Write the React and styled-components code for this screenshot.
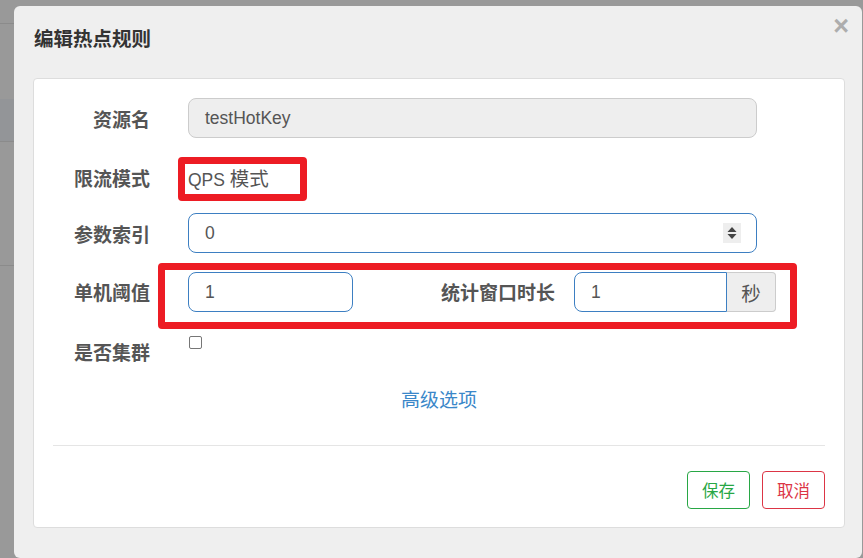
import React from "react";
import styled, { createGlobalStyle } from "styled-components";

const Global = createGlobalStyle`
  html, body { margin: 0; padding: 0; }
  body {
    font-family: "Liberation Sans", "Noto Sans CJK SC", sans-serif;
    background: #999;
  }
  * { box-sizing: border-box; }
`;

const Page = styled.div`
  display: flex;
  height: 558px;
  background: #999;
  overflow: hidden;
`;

const Sidebar = styled.div`
  width: 14px;
  flex-shrink: 0;
  display: flex;
  flex-direction: column;
`;

const SideBand = styled.div`
  height: ${(p) => p.$h}px;
  flex-shrink: 0;
  background: ${(p) => p.$bg || "#999"};
  border-bottom: 1px solid ${(p) => (p.$line ? "#8b8b8b" : "transparent")};
`;

const Modal = styled.div`
  flex: 1;
  margin: 6px 1px 0 0;
  background: #efefef;
  border-radius: 6px;
  display: flex;
  flex-direction: column;
`;

const Header = styled.div`
  height: 72px;
  display: flex;
  justify-content: space-between;
  align-items: flex-start;
  padding: 0 13px 0 20px;
`;

const Title = styled.h4`
  margin: 23px 0 0;
  font-size: 19.5px;
  line-height: 20px;
  font-weight: bold;
  color: #333;
`;

const Close = styled.span`
  margin-top: 7px;
  font-size: 27px;
  line-height: 27px;
  font-weight: bold;
  color: #adadad;
`;

const Panel = styled.div`
  margin: 0 17px 0 19px;
  background: #fff;
  border: 1px solid #ddd;
  border-radius: 4px;
  padding: 19px 19px 18px;
  display: flex;
  flex-direction: column;
`;

const Row = styled.div`
  display: flex;
  align-items: center;
  height: ${(p) => p.$h}px;
  margin-top: ${(p) => p.$mt || 0}px;
`;

const Label = styled.label`
  width: 97px;
  flex-shrink: 0;
  margin-right: 38px;
  text-align: right;
  font-size: 19px;
  line-height: 24px;
  font-weight: bold;
  color: #555;
  position: relative;
  top: ${(p) => p.$dy || 0}px;
  white-space: nowrap;
`;

const Field = styled.div`
  display: flex;
  align-items: center;
  width: ${(p) => p.$w}px;
  height: 40px;
  padding: 0 16px;
  border: 1px solid ${(p) => (p.$disabled ? "#ccc" : "#3d7fc2")};
  background: ${(p) => (p.$disabled ? "#eee" : "#fff")};
  border-radius: ${(p) => (p.$group ? "8px 0 0 8px" : "8px")};
  font-size: 17.5px;
  color: #555;
`;

const Value = styled.span`
  flex: 1;
  line-height: 20px;
`;

const Cjk = styled.span`
  font-size: 19.5px;
`;

const Spinner = styled.span`
  display: flex;
  align-items: center;
  justify-content: center;
  width: 18px;
  height: 20px;
  margin-right: -1px;
  background: #eee;
`;

const Highlight = styled.div`
  display: flex;
  align-items: ${(p) => (p.$top ? "flex-start" : "center")};
  width: ${(p) => p.$w}px;
  height: ${(p) => p.$h}px;
  margin-left: ${(p) => p.$ml}px;
  padding: ${(p) => p.$pad};
  border: 7px solid #ed1c24;
  border-radius: 4px;
`;

const PlainText = styled.span`
  font-size: 17.5px;
  line-height: 22px;
  color: #555;
`;

const InlineLabel = styled.span`
  margin-left: auto;
  margin-right: 19px;
  font-size: 19px;
  line-height: 24px;
  font-weight: bold;
  color: #555;
  white-space: nowrap;
  align-self: center;
  position: relative;
  top: 2px;
`;

const Group = styled.div`
  display: flex;
`;

const Addon = styled.span`
  width: 49px;
  height: 40px;
  display: flex;
  align-items: center;
  justify-content: center;
  background: #eee;
  border: 1px solid #ccc;
  border-left: none;
  border-radius: 0 4px 4px 0;
  font-size: 19.5px;
  color: #555;
`;

const Check = styled.span`
  align-self: flex-start;
  margin: 7px 0 0 1px;
  width: 13px;
  height: 13px;
  border: 1px solid #767676;
  border-radius: 2px;
  background: #fff;
`;

const LinkRow = styled.div`
  margin-top: 12px;
  height: 24px;
  text-align: center;
`;

const Link = styled.a`
  font-size: 19px;
  line-height: 24px;
  color: #3a87c9;
  text-decoration: none;
`;

const Divider = styled.div`
  margin-top: 32px;
  height: 1px;
  background: #e5e5e5;
`;

const Footer = styled.div`
  margin-top: 25px;
  display: flex;
  justify-content: flex-end;
  gap: 12px;
`;

const Button = styled.button`
  width: 63px;
  height: 38px;
  padding: 0;
  background: #fff;
  border: 1px solid ${(p) => p.$color};
  border-radius: 4px;
  color: ${(p) => p.$color};
  font-family: inherit;
  font-size: 16.5px;
`;

const SpinIcon = () => (
  <svg width="10" height="14" viewBox="0 0 10 14">
    <path d="M5 1 L9.5 6 L0.5 6 Z" fill="#444" />
    <path d="M0.5 8 L9.5 8 L5 13 Z" fill="#444" />
  </svg>
);

export default function App() {
  return (
    <>
      <Global />
      <Page>
        <Sidebar>
          <SideBand $h={24} $line />
          <SideBand $h={75} />
          <SideBand $h={43} $bg="#939598" $line />
          <SideBand $h={124} $line />
          <SideBand $h={290} />
        </Sidebar>
        <Modal>
          <Header>
            <Title>编辑热点规则</Title>
            <Close>×</Close>
          </Header>
          <Panel>
            <Row $h={40}>
              <Label $dy={3}>资源名</Label>
              <Field $w={569} $disabled>
                <Value>testHotKey</Value>
              </Field>
            </Row>
            <Row $h={44} $mt={19}>
              <Label $dy={1}>限流模式</Label>
              <Highlight $w={129} $h={44} $ml={-10} $pad="0 0 0 3px">
                <PlainText>
                  QPS <Cjk>模式</Cjk>
                </PlainText>
              </Highlight>
            </Row>
            <Row $h={40} $mt={12}>
              <Label $dy={3}>参数索引</Label>
              <Field $w={569}>
                <Value>0</Value>
                <Spinner>
                  <SpinIcon />
                </Spinner>
              </Field>
            </Row>
            <Row $h={66} $mt={10}>
              <Label $dy={-2}>单机阈值</Label>
              <Highlight $w={639} $h={66} $ml={-30} $pad="2px 14px 11px 23px" $top>
                <Field $w={165}>
                  <Value>1</Value>
                </Field>
                <InlineLabel>统计窗口时长</InlineLabel>
                <Group>
                  <Field $w={153} $group>
                    <Value>1</Value>
                  </Field>
                  <Addon>秒</Addon>
                </Group>
              </Highlight>
            </Row>
            <Row $h={48}>
              <Label $dy={1}>是否集群</Label>
              <Check />
            </Row>
            <LinkRow>
              <Link>高级选项</Link>
            </LinkRow>
            <Divider />
            <Footer>
              <Button $color="#28a745">保存</Button>
              <Button $color="#dc3545">取消</Button>
            </Footer>
          </Panel>
        </Modal>
      </Page>
    </>
  );
}
